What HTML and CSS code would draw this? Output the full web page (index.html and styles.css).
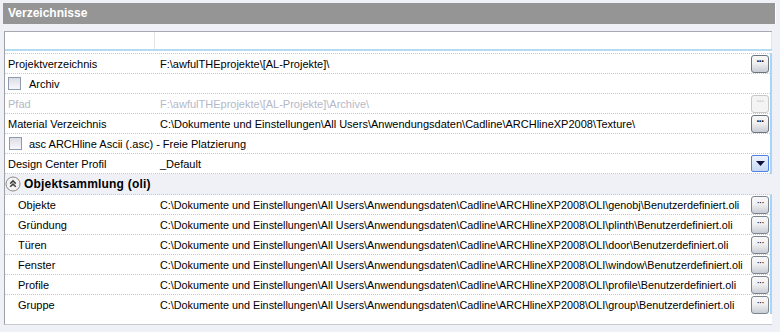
FILE: index.html
```html
<!DOCTYPE html>
<html lang="de">
<head>
  <meta charset="UTF-8">
  <title>Verzeichnisse</title>
  <link rel="stylesheet" href="styles.css">
</head>
<body>
  <div class="title">Verzeichnisse</div>

  <div class="grid">
    <div class="colhead"><span class="c1"></span><span class="c2"></span></div>
    <div class="rows">
      <div class="row"><span class="label">Projektverzeichnis</span><span class="value">F:\awfulTHEprojekte\[AL-Projekte]\</span><span class="btn">···</span></div>
      <div class="row"><span class="check"><i class="box"></i>Archiv</span></div>
      <div class="row disabled"><span class="label">Pfad</span><span class="value">F:\awfulTHEprojekte\[AL-Projekte]\Archive\</span><span class="btn off">···</span></div>
      <div class="row"><span class="label">Material Verzeichnis</span><span class="value">C:\Dokumente und Einstellungen\All Users\Anwendungsdaten\Cadline\ARCHlineXP2008\Texture\</span><span class="btn">···</span></div>
      <div class="row"><span class="check"><i class="box"></i>asc ARCHline Ascii (.asc) - Freie Platzierung</span></div>
      <div class="row"><span class="label">Design Center Profil</span><span class="value">_Default</span><span class="drop"><svg width="9" height="5" viewBox="0 0 9 5"><path d="M0 0h9L4.5 5z" fill="#101040"/></svg></span></div>
      <div class="group">
        <svg class="toggle" width="16" height="16" viewBox="0 0 16 16">
          <circle cx="8" cy="8" r="7" fill="#f4f4f4" stroke="#8a8a8a"/>
          <path d="M5.2 7.6 8 4.9 10.8 7.6M5.2 10.8 8 8.1 10.8 10.8" fill="none" stroke="#404040" stroke-width="1.5"/>
        </svg>
        <b>Objektsammlung (oli)</b>
      </div>
      <div class="row sub"><span class="label">Objekte</span><span class="value">C:\Dokumente und Einstellungen\All Users\Anwendungsdaten\Cadline\ARCHlineXP2008\OLI\genobj\Benutzerdefiniert.oli</span><span class="btn small">···</span></div>
      <div class="row sub"><span class="label">Gründung</span><span class="value">C:\Dokumente und Einstellungen\All Users\Anwendungsdaten\Cadline\ARCHlineXP2008\OLI\plinth\Benutzerdefiniert.oli</span><span class="btn small">···</span></div>
      <div class="row sub"><span class="label">Türen</span><span class="value">C:\Dokumente und Einstellungen\All Users\Anwendungsdaten\Cadline\ARCHlineXP2008\OLI\door\Benutzerdefiniert.oli</span><span class="btn small">···</span></div>
      <div class="row sub"><span class="label">Fenster</span><span class="value">C:\Dokumente und Einstellungen\All Users\Anwendungsdaten\Cadline\ARCHlineXP2008\OLI\window\Benutzerdefiniert.oli</span><span class="btn small">···</span></div>
      <div class="row sub"><span class="label">Profile</span><span class="value">C:\Dokumente und Einstellungen\All Users\Anwendungsdaten\Cadline\ARCHlineXP2008\OLI\profile\Benutzerdefiniert.oli</span><span class="btn small">···</span></div>
      <div class="row sub"><span class="label">Gruppe</span><span class="value">C:\Dokumente und Einstellungen\All Users\Anwendungsdaten\Cadline\ARCHlineXP2008\OLI\group\Benutzerdefiniert.oli</span><span class="btn small">···</span></div>
    </div>
  </div>
</body>
</html>
```

FILE: styles.css
```css
body { margin: 0; padding: 3px 4px 0 3px; background: #f0f0f7; font-family: "Liberation Sans", Arial, sans-serif; font-size: 11px; color: #000; }

.title { height: 21px; line-height: 21px; background: #959595; color: #fff; font-weight: bold; font-size: 12px; padding-left: 5px; border-right: 1px solid #fff; }

.grid { margin: 7px 4px 0 1px; background: #fff; border-left: 1px solid #a0a0a8; border-bottom: 1px solid #c8c8d0; height: 293px; }
.colhead { display: flex; height: 17px; border-top: 1px solid #a8a8b4; border-bottom: 2px solid #b4dcf0; }
.colhead .c1 { width: 149px; border-right: 1px solid #e4e4e4; }
.colhead .c2 { flex: 1; border-right: 1px solid #e4e4e4; }

.rows { border-right: 2px solid #a8d4f8; margin-top: 2px; }
.row { display: flex; align-items: center; height: 19px; border-bottom: 1px dotted #c8c8c8; }
.row:first-child { border-top: 1px dotted #c8c8c8; }
.label { width: 150px; padding-left: 3px; flex-shrink: 0; }
.value { flex: 1; min-width: 0; padding-left: 2px; white-space: nowrap; }
.disabled { color: #b4b8c8; }

.check { display: flex; align-items: center; padding-left: 3px; }
.box { width: 11px; height: 11px; border: 1px solid #8c9cb0; background: linear-gradient(#dcdce4, #f8f8fc); margin-right: 8px; }
.row:nth-child(5) .box { margin-left: 1px; margin-right: 7px; }

.btn { flex-shrink: 0; width: 16px; height: 16px; margin-right: 1px; border: 1px solid #6c7480; border-radius: 3px; background: linear-gradient(#f8f8f8 0, #f0f0f0 45%, #c8ccd4 100%); font-size: 10px; font-weight: bold; line-height: 12px; text-align: center; letter-spacing: -1px; color: #000; }
.btn.off { border-color: #c8c8c8; background: #f4f4f4; color: #d0d0d0; }
.btn.small { font-weight: normal; border-color: #7c8490; }
.drop { flex-shrink: 0; width: 16px; height: 15px; margin-right: 1px; border: 1px solid #5080e0; border-radius: 2px; background: linear-gradient(#f0f4fc, #c4d8f4); display: flex; align-items: center; justify-content: center; }

.group { display: flex; align-items: center; height: 20px; background: #f0f0f7; border-bottom: 1px dotted #c8c8c8; margin-right: -2px; padding-left: 0; }
.toggle { margin-right: 3px; }
.group b { font-size: 12px; letter-spacing: 0.2px; }

.sub .label { padding-left: 13px; width: 140px; }
.sub .value { font-size: 10.8px; }
.sub:last-child { border-bottom: none; }
.group ~ .row { margin-right: -2px; padding-right: 2px; }
```
